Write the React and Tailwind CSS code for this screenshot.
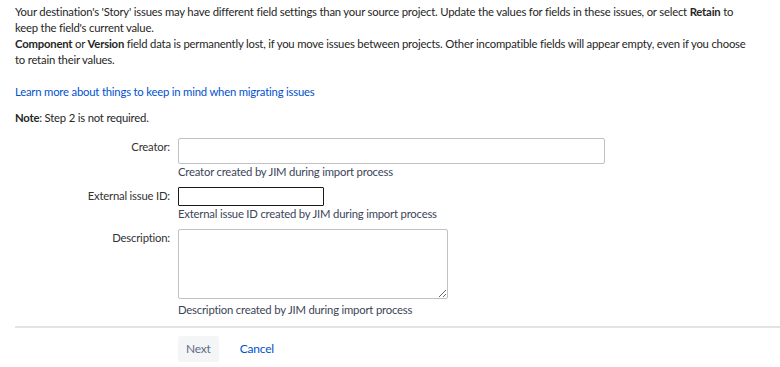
// Move issues: update fields step
const fields = [
  {
    label: "Creator:",
    help: "Creator created by JIM during import process",
    kind: "wide",
  },
  {
    label: "External issue ID:",
    help: "External issue ID created by JIM during import process",
    kind: "short",
  },
  {
    label: "Description:",
    help: "Description created by JIM during import process",
    kind: "area",
  },
];

function FieldInput({ kind }) {
  if (kind === "wide") {
    return (
      <input
        type="text"
        className="block h-[26px] w-[427px] rounded-[2px] border border-[#c1c1c1] bg-white px-1 outline-none"
      />
    );
  }
  if (kind === "short") {
    return (
      <input
        type="text"
        className="block h-[19px] w-[146px] rounded-[1px] border border-[#1a1a1a] bg-white px-1 outline-none"
      />
    );
  }
  return (
    <textarea className="block h-[70px] w-[270px] rounded-[2px] border border-[#c1c1c1] bg-white px-1 outline-none" />
  );
}

export default function App() {
  return (
    <div
      className="min-h-[367px] w-[780px] bg-white pt-[4px] text-[11.3px] leading-[16px] tracking-[-0.2px] text-[#262626]"
      style={{ fontFamily: 'Lato, "Noto Sans", sans-serif' }}
    >
      <div className="pl-[15px]">
        <p>
          Your destination's 'Story' issues may have different field settings than your source
          project. Update the values for fields in these issues, or select <b>Retain</b> to
          <br />
          keep the field's current value.
        </p>
        <p>
          <b>Component</b> or <b>Version</b> field data is permanently lost, if you move issues
          between projects. Other incompatible fields will appear empty, even if you choose
          <br />
          to retain their values.
        </p>
        <p className="mt-[16px]">
          <a href="#" className="text-[#0052cc]">
            Learn more about things to keep in mind when migrating issues
          </a>
        </p>
        <p className="mt-[10px]">
          <b>Note</b>: Step 2 is not required.
        </p>
      </div>

      <div className="mt-[12px] flex flex-col gap-[8px]">
        {fields.map((f) => (
          <div key={f.label} className="flex gap-[8px]">
            <label className="w-[170px] shrink-0 pt-[1px] text-right text-[#333]">
              {f.label}
            </label>
            <div>
              <FieldInput kind={f.kind} />
              <div
                className={
                  f.kind === "area"
                    ? "mt-[3px] leading-[15px] text-[#3b4559]"
                    : "leading-[15px] text-[#3b4559]"
                }
              >
                {f.help}
              </div>
            </div>
          </div>
        ))}
      </div>

      <div className="ml-[15px] mt-[9px] h-[2px] bg-[#e3e3e3]" />

      <div className="mt-[8px] flex items-center gap-[21px] pl-[178px]">
        <button className="h-[26px] rounded-[3px] bg-[#f4f5f7] px-[8px] text-[12px] text-[#5e6c84]">
          Next
        </button>
        <a href="#" className="text-[12px] text-[#0052cc]">
          Cancel
        </a>
      </div>
    </div>
  );
}
